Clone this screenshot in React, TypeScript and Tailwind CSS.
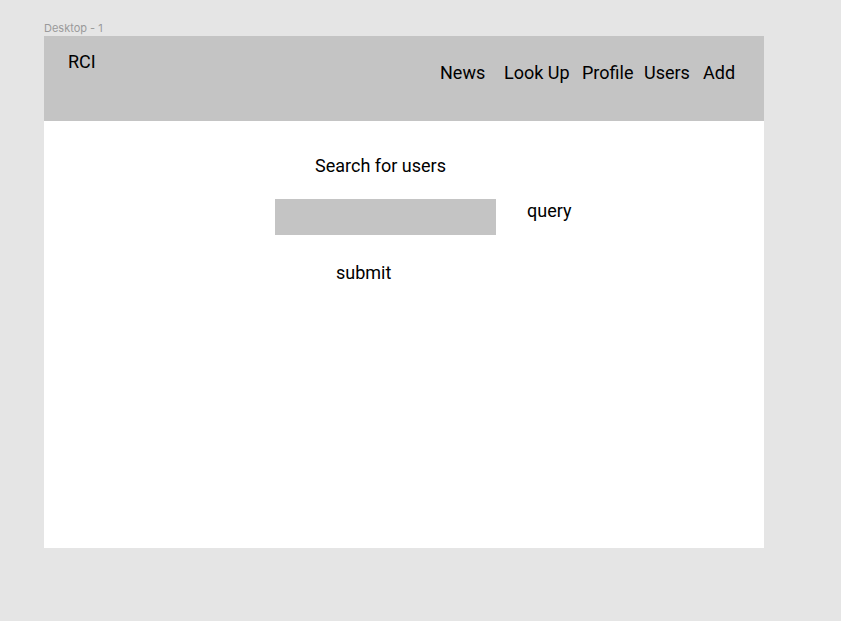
const navItems = [
  { label: "News", width: "w-[64px]" },
  { label: "Look Up", width: "w-[78px]" },
  { label: "Profile", width: "w-[62px]" },
  { label: "Users", width: "w-[59px]" },
  { label: "Add", width: "w-[40px]" },
];

export default function App() {
  return (
    <div className="min-h-[621px] w-full bg-[#e5e5e5] pl-[44px] pt-[21px] font-['Roboto',sans-serif] text-black">
      <div className="h-[15px] font-['Inter',sans-serif] text-[11px] leading-[15px] text-[#9a9a9a]">Desktop - 1</div>

      <div className="flex h-[512px] w-[720px] flex-col bg-white">
        <header className="flex h-[85px] items-start bg-[#c4c4c4] pl-[24px]">
          <div className="mt-[15px] w-[372px] text-[18px] leading-[21px]">RCI</div>
          <nav className="mt-[26px] flex">
            {navItems.map((item) => (
              <span key={item.label} className={`${item.width} text-[18px] leading-[21px]`}>
                {item.label}
              </span>
            ))}
          </nav>
        </header>

        <main className="flex flex-col pt-[34px] text-[18px] leading-[21px]">
          <div className="ml-[271px]">Search for users</div>
          <div className="mt-[23px] flex items-start">
            <div className="ml-[231px] h-[36px] w-[221px] bg-[#c4c4c4]" />
            <span className="ml-[31px] mt-[1px]">query</span>
          </div>
          <div className="ml-[292px] mt-[27px]">submit</div>
        </main>
      </div>
    </div>
  );
}
